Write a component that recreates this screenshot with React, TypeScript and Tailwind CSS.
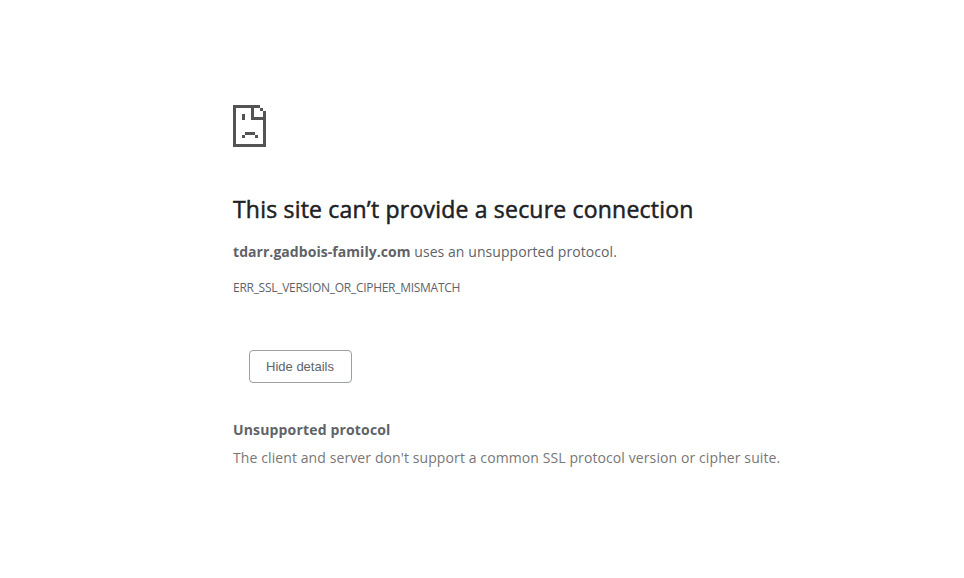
import React from 'react';

const SadPageIcon: React.FC = () => (
  <svg width="33" height="42" viewBox="0 0 33 42" fill="#535353" shapeRendering="crispEdges" aria-hidden="true">
    {/* Page outline with folded corner */}
    <path d="M0 0h27v3H21v9h9V6h3v36H0zM3 3v36h27V15H18V3z" fillRule="evenodd" />
    <path d="M27 3h3v3h-3z" />
    {/* Face */}
    <path d="M9 9h3v6H9zM12 27h10v3H12zM9 30h3v3H9zM22 30h3v3h-3z" />
  </svg>
);

const App: React.FC = () => {
  return (
    <div className="min-h-screen bg-white font-['Open_Sans','Noto_Sans',sans-serif] text-[#5f6368]">
      <main className="ml-[233px] w-[600px] pt-[105px]">
        <SadPageIcon />

        <h1 className="mt-[46px] h-8 whitespace-nowrap text-[23px] leading-8 font-medium tracking-[0.2px] text-[#202124] [-webkit-text-stroke:0.5px_#202124]">
          <span>This site can’t provide a secure connection</span>
        </h1>
        <p className="mt-[15px] h-6 whitespace-nowrap text-[14px] leading-6">
          <strong className="font-bold tracking-[0.05px]">tdarr.gadbois-family.com</strong>
          <span className="tracking-[0.07px]"> uses an unsupported protocol.</span>
        </p>
        <div className="mt-[14px] h-5 whitespace-nowrap text-[12px] leading-5 tracking-[-0.28px]">
          <span>ERR_SSL_VERSION_OR_CIPHER_MISMATCH</span>
        </div>

        <button className="mt-[52px] ml-4 block h-[33px] w-[103px] rounded-[4px] border border-[#9aa0a6] pr-px font-['Liberation_Sans',sans-serif] text-[13px] leading-none">
          Hide details
        </button>

        <section className="mt-[35px] whitespace-nowrap text-[14px] leading-6">
          <h2 className="font-bold tracking-[0.16px]">Unsupported protocol</h2>
          <p className="mt-1 tracking-[0.1px] text-[#777]">
            <span>The client and server don't support a common SSL protocol version or cipher suite.</span>
          </p>
        </section>
      </main>
    </div>
  );
};

export default App;
